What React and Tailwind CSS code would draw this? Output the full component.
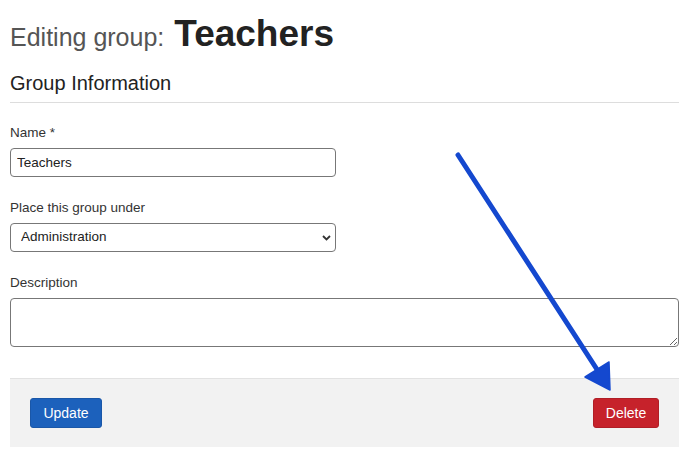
import React from 'react';

const fieldLabel = 'block text-[13.5px] leading-[16px] text-[#333] mb-[7px]';
const fieldBox = 'block w-[326px] h-[29px] rounded-[4px] border border-[#777] bg-white text-[13.5px] text-[#222] outline-none';

const Arrow = () => (
    <svg className="absolute left-0 top-0 pointer-events-none" width="692" height="457" viewBox="0 0 692 457">
        <line x1="458" y1="155" x2="598" y2="371" stroke="#1448cf" strokeWidth="5" strokeLinecap="round" />
        <polygon points="585,377 609,362 610,390" fill="#1448cf" stroke="#1448cf" strokeWidth="1.5" strokeLinejoin="round" />
    </svg>
);

const App = () => {
    return (
        <div className="relative w-[692px] h-[457px] bg-white overflow-hidden font-['Liberation_Sans',Arial,sans-serif]">
            <div className="w-[669px] ml-[10px] pt-[13px]">
                <h1 className="flex items-baseline h-[42px] leading-[42px]">
                    <span className="text-[25px] text-[#555]">Editing group:</span>
                    <span className="ml-[10px] text-[37px] font-bold text-[#222]">Teachers</span>
                </h1>

                <div className="mt-[16px] pb-[7px] border-b border-[#ddd]">
                    <h2 className="text-[20px] leading-[24px] text-[#222]">Group Information</h2>
                </div>

                <form className="mt-[22px]" onSubmit={(e) => e.preventDefault()}>
                    <label className={fieldLabel}>Name *</label>
                    <input className={`${fieldBox} px-[6px]`} defaultValue="Teachers" />

                    <label className={`${fieldLabel} mt-[23px]`}>Place this group under</label>
                    <div className="relative w-[326px]">
                        <select className={`${fieldBox} appearance-none pl-[10px]`} defaultValue="Administration">
                            <option>Administration</option>
                            <option>Staff</option>
                        </select>
                        <svg className="absolute right-[5px] top-[12px] pointer-events-none" width="9" height="6" viewBox="0 0 9 6">
                            <path d="M1 1l3.5 3.5L8 1" fill="none" stroke="#333" strokeWidth="1.8" />
                        </svg>
                    </div>

                    <label className={`${fieldLabel} mt-[23px]`}>Description</label>
                    <textarea className="block w-[669px] h-[49px] rounded-[4px] border border-[#777] bg-white text-[13.5px] px-[6px] py-[4px] outline-none" />

                    <div className="mt-[31px] h-[69px] bg-[#f2f2f2] border-t border-[#e2e2e2] px-[20px] pt-[19px] flex justify-between items-start">
                        <button type="submit" className="w-[72px] h-[30px] rounded-[3px] bg-[#1c61bc] border border-[#1a57a8] text-white text-[14px]">
                            Update
                        </button>
                        <button type="button" className="w-[66px] h-[30px] rounded-[3px] bg-[#c6222b] border border-[#b01e26] text-white text-[14px]">
                            Delete
                        </button>
                    </div>
                </form>
            </div>
            <Arrow />
        </div>
    );
};

export default App;
